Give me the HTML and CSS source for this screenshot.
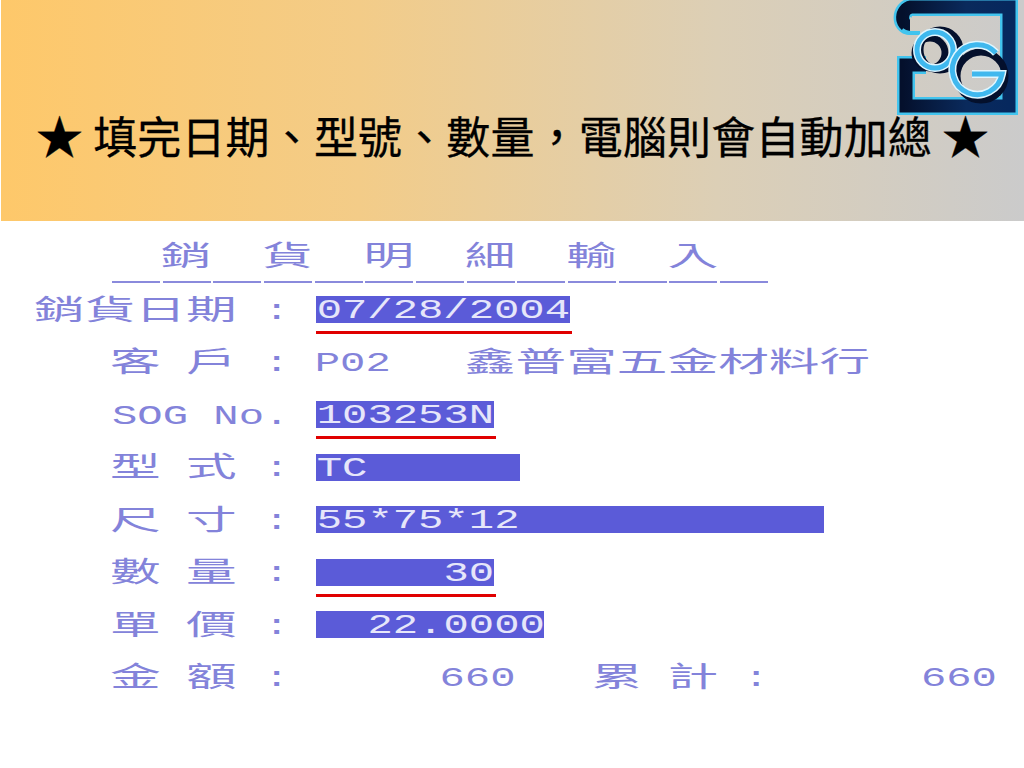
FILE: index.html
```html
<!DOCTYPE html>
<html lang="zh-Hant">
<head>
<meta charset="utf-8">
<title>銷貨明細輸入</title>
<link rel="stylesheet" href="styles.css">
</head>
<body>
<header class="banner">
  <h1 class="headline"><span class="star">★</span> 填完日期、型號、數量，電腦則會自動加總 <span class="star">★</span></h1>
  <svg class="logo" viewBox="0 0 144 120" aria-hidden="true">
    <defs>
      <linearGradient id="bar" x1="0" x2="1" y1="0" y2="0">
        <stop offset="0" stop-color="#04102c"/>
        <stop offset="0.6" stop-color="#0a2a5c"/>
        <stop offset="1" stop-color="#06285e"/>
      </linearGradient>
    </defs>
    <path class="frame-edge" d="M30 26 C20 26 20 9 31 7 L129 7 L129 106 L26 106 L26 65 L46 65"/>
    <path class="frame-fill" stroke="url(#bar)" d="M30 26 C20 26 20 9 31 7 L129 7 L129 106 L26 106 L26 65 L46 65"/>
    <path class="hook-tail" d="M22 30 C28 34 32 33 40 33"/>
    <circle class="ring-shadow" cx="60" cy="50" r="20"/>
    <circle class="ring-shadow" cx="50" cy="53" r="15"/>
    <circle class="ring-edge" cx="55" cy="50" r="18"/>
    <circle class="ring-fill" cx="55" cy="50" r="18"/>
    <circle class="ring-shadow" cx="101" cy="76" r="24"/>
    <path class="ring-edge" d="M116 53 A25 25 0 1 0 122 74 L92 74"/>
    <path class="ring-fill" d="M116 53 A25 25 0 1 0 122 74 L92 74"/>
  </svg>
</header>
<main class="screen">
  <div class="row heading">     <span class="cjk">銷</span>  <span class="cjk">貨</span>  <span class="cjk">明</span>  <span class="cjk">細</span>  <span class="cjk">輸</span>  <span class="cjk">入</span></div>
  <div class="rule"></div>
  <div class="row"><span class="cjk">銷貨日期</span><span class="tall"> : </span><span class="field w10 marked"><span class="tall">07/28/2004</span></span></div>
  <div class="row">   <span class="cjk">客</span> <span class="cjk">戶</span><span class="tall"> : </span><span class="tall">P02</span>   <span class="cjk">鑫普富五金材料行</span></div>
  <div class="row">   <span class="tall">SOG No. </span><span class="field w7 marked"><span class="tall">103253N</span></span></div>
  <div class="row">   <span class="cjk">型</span> <span class="cjk">式</span><span class="tall"> : </span><span class="field w8"><span class="tall">TC</span></span></div>
  <div class="row">   <span class="cjk">尺</span> <span class="cjk">寸</span><span class="tall"> : </span><span class="field w20"><span class="tall">55*75*12</span></span></div>
  <div class="row">   <span class="cjk">數</span> <span class="cjk">量</span><span class="tall"> : </span><span class="field w7 marked"><span class="tall">     30</span></span></div>
  <div class="row">   <span class="cjk">單</span> <span class="cjk">價</span><span class="tall"> : </span><span class="field w9"><span class="tall">  22.0000</span></span></div>
  <div class="row">   <span class="cjk">金</span> <span class="cjk">額</span><span class="tall"> : </span><span class="tall amount">     660</span>   <span class="cjk">累</span> <span class="cjk">計</span><span class="tall amount"> :      660</span></div>
</main>
</body>
</html>
```
FILE: styles.css
```css
html, body {
  margin: 0;
  height: 768px;
  overflow: hidden;
  background: #fff;
}

.banner {
  position: relative;
  height: 221px;
  margin-left: 1px;
  display: flex;
  align-items: center;
  padding: 0 0 0 35px;
  box-sizing: border-box;
  background: linear-gradient(90deg, #fec86a 0%, #f3cc88 35%, #dccfb6 70%, #cbcbcb 100%);
}

.headline {
  margin: 46px 0 0;
  font: 400 44px/1 "Noto Sans CJK TC", "Liberation Sans", sans-serif;
  letter-spacing: 0.15px;
  color: #000;
  white-space: nowrap;
  -webkit-text-stroke: 0.3px #000;
}

.star {
  font-size: 47px;
  line-height: 1;
}

.logo {
  position: absolute;
  left: 879px;
  top: 0;
  width: 144px;
  height: 120px;
}

.frame-edge, .frame-fill, .hook-tail, .ring-edge, .ring-fill, .ring-shadow {
  fill: none;
}
.frame-edge { stroke: #42c4ee; stroke-width: 18; }
.frame-fill { stroke-width: 13; }
.hook-tail { stroke: #42c4ee; stroke-width: 4; }
.ring-shadow { stroke: #04102c; stroke-width: 7; }
.ring-edge { stroke: #dff6ff; stroke-width: 8; }
.ring-fill { stroke: #3fb8ee; stroke-width: 5; }

.screen {
  width: 512px;
  padding: 11px 0 0 18px;
  box-sizing: border-box;
  transform: scaleX(2);
  transform-origin: left top;
  font: 400 21.11px "Liberation Mono", monospace;
  color: #8383da;
}

.row {
  height: 52.5px;
  line-height: 52.5px;
  white-space: pre;
}
.row.heading {
  height: 49px;
  line-height: 49px;
}

.rule {
  height: 2px;
  margin: 0 0 0.5px 38px;
  width: 328px;
  background: repeating-linear-gradient(90deg, #8a8adc 0 24px, #fff 24px 25.33px);
}

.cjk {
  display: inline-block;
  font-family: "Noto Sans CJK TC", "Noto Sans CJK SC", sans-serif;
  font-size: 25.33px;
  line-height: 1;
  transform: translate(-1px, 3px) scaleY(1.1);
}

.tall {
  display: inline-block;
  transform: translateY(1px) scaleY(1.28);
  line-height: 27px;
}
.tall.amount {
  transform: translate(-1px, 1px) scaleY(1.28);
}

.field {
  display: inline-block;
  position: relative;
  height: 27px;
  line-height: 27px;
  margin-left: 1px;
  vertical-align: middle;
  background: #5b5bd8;
  color: #e6e6fa;
}
.w7 { width: 7ch; }
.w8 { width: 8ch; }
.w9 { width: 9ch; }
.w10 { width: 10ch; }
.w20 { width: 20ch; }

.marked::after {
  content: "";
  position: absolute;
  left: 0;
  right: -1px;
  bottom: -11px;
  height: 3px;
  background: #e00000;
}
```
